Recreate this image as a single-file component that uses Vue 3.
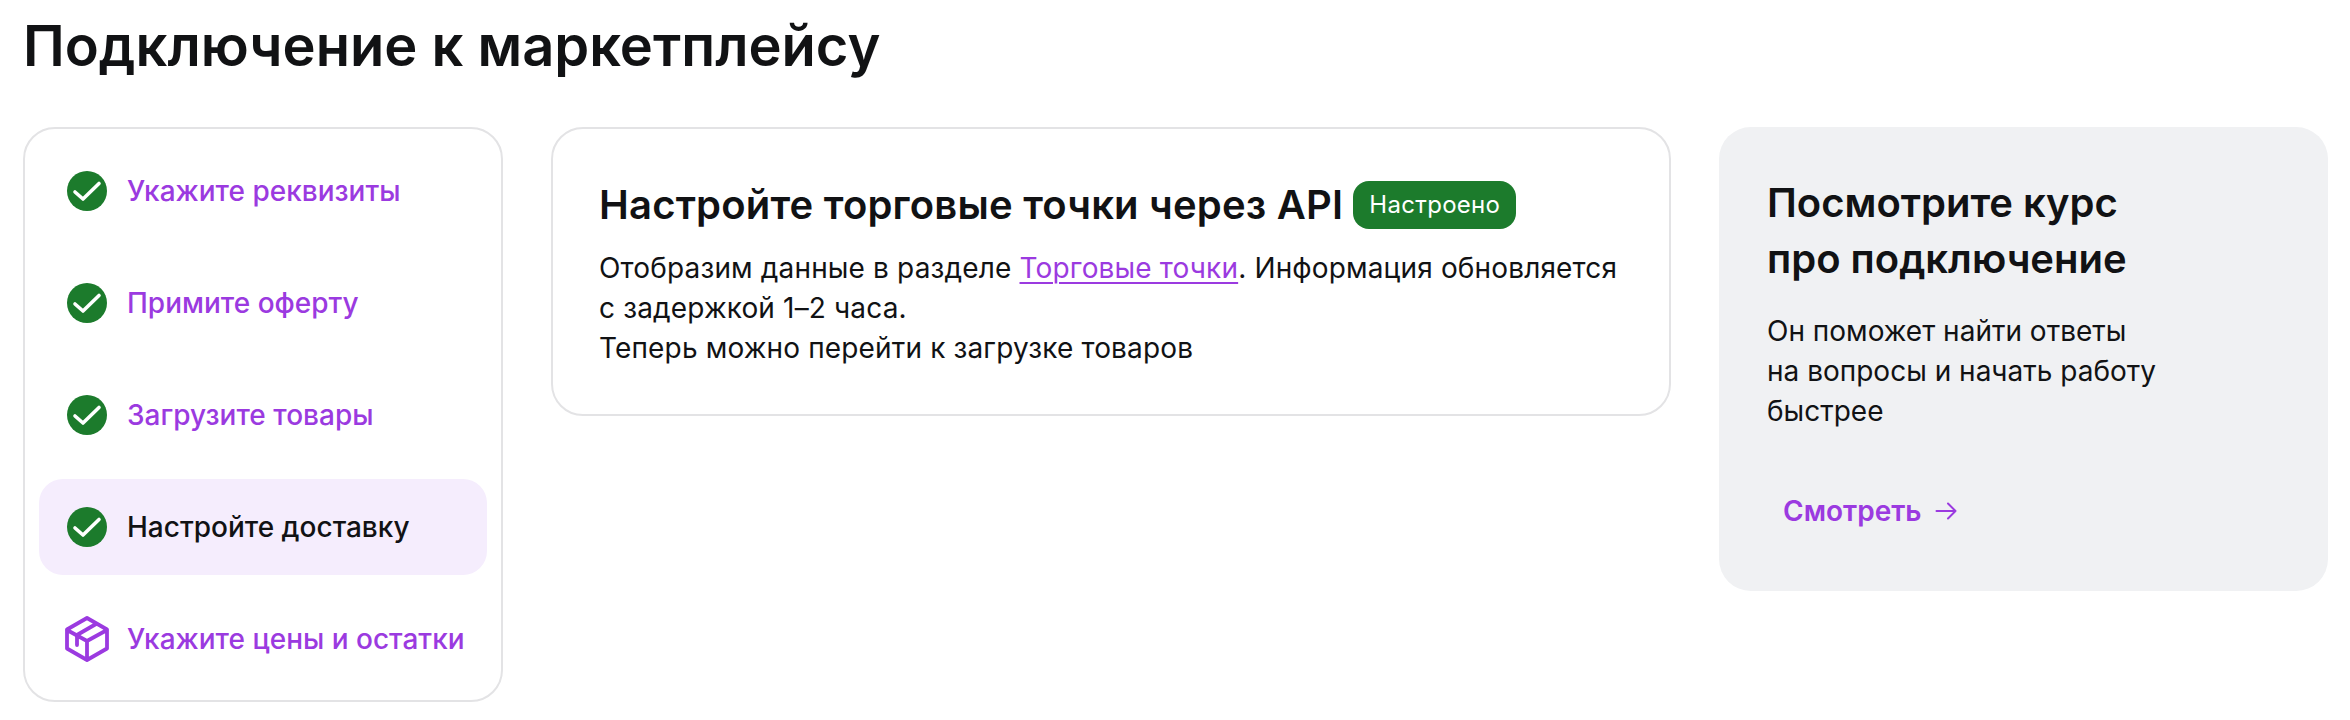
<template>
  <div class="page">
    <h1 class="title">Подключение к маркетплейсу</h1>
    <div class="layout">
      <nav class="steps">
        <a
          v-for="step in steps"
          :key="step.text"
          class="step"
          :class="{ active: step.active }"
        >
          <svg v-if="step.done" class="icon" viewBox="0 0 40 40">
            <circle cx="20" cy="20" r="20" fill="#1c7b2c" />
            <path
              d="M8 21 L16 28 L32 12.5"
              fill="none"
              stroke="#fff"
              stroke-width="3.6"
              stroke-linecap="round"
              stroke-linejoin="round"
            />
          </svg>
          <svg v-else class="icon box" viewBox="0 0 44 46">
            <path
              d="M22 2 L42 13.5 V32.5 L22 44 L2 32.5 V13.5 Z M2 14 L22 25 L42 14 M22 25 V44 M12 19 V29 M12 19 L31 8"
              fill="none"
              stroke="#9b3ae0"
              stroke-width="3.8"
              stroke-linecap="round"
              stroke-linejoin="round"
            />
          </svg>
          <span>{{ step.text }}</span>
        </a>
      </nav>

      <section class="card">
        <div class="card-head">
          <h2>Настройте торговые точки через API</h2>
          <span class="badge">Настроено</span>
        </div>
        <p>
          Отобразим данные в разделе <a class="link">Торговые точки</a>. Информация обновляется<br />
          с задержкой 1–2 часа.<br />
          Теперь можно перейти к загрузке товаров
        </p>
      </section>

      <aside class="course">
        <h2>Посмотрите курс<br />про подключение</h2>
        <p>Он поможет найти ответы<br />на вопросы и начать работу<br />быстрее</p>
        <button class="watch">
          Смотреть
          <svg width="22" height="18" viewBox="0 0 22 18">
            <path
              d="M1.5 9 H20.5 M13 1.5 L20.5 9 L13 16.5"
              fill="none"
              stroke="#9b3ae0"
              stroke-width="2"
              stroke-linecap="round"
              stroke-linejoin="round"
            />
          </svg>
        </button>
      </aside>
    </div>
  </div>
</template>

<script setup>
const steps = [
  { text: 'Укажите реквизиты', done: true },
  { text: 'Примите оферту', done: true },
  { text: 'Загрузите товары', done: true },
  { text: 'Настройте доставку', done: true, active: true },
  { text: 'Укажите цены и остатки', done: false },
];
</script>

<style>
body {
  background: #fff;
}
</style>

<style scoped>
.page {
  width: 2350px;
  height: 720px;
  box-sizing: border-box;
  padding: 12px 21px 0 23px;
  font-family: Inter, 'Noto Sans', sans-serif;
  color: #111214;
  overflow: hidden;
}

.title {
  margin: 0 0 47px;
  font-size: 56px;
  line-height: 68px;
  font-weight: 600;
  letter-spacing: 0;
}

.layout {
  display: grid;
  grid-template-columns: 480px 1120px 609px;
  column-gap: 48px;
  align-items: start;
}

.steps {
  box-sizing: border-box;
  height: 575px;
  padding: 14px;
  border: 2px solid #e3e3e5;
  border-radius: 32px;
  display: flex;
  flex-direction: column;
  gap: 16px;
}

.step {
  height: 96px;
  flex: none;
  display: flex;
  align-items: center;
  gap: 20px;
  padding-left: 28px;
  border-radius: 24px;
  font-size: 28px;
  font-weight: 500;
  color: #9b3ae0;
}

.step.active {
  background: #f5edfd;
  color: #111214;
}

.icon {
  width: 40px;
  height: 40px;
  flex: none;
}

.icon.box {
  width: 44px;
  height: 46px;
  margin: 0 -2px;
}

.card {
  box-sizing: border-box;
  height: 289px;
  padding: 52px 46px;
  border: 2px solid #e3e3e5;
  border-radius: 32px;
}

.card-head {
  display: flex;
  align-items: center;
  gap: 10px;
  margin-bottom: 19px;
}

h2 {
  margin: 0;
  font-size: 40px;
  line-height: 48px;
  font-weight: 600;
}

.card h2 {
  letter-spacing: 0.2px;
}

p {
  margin: 0;
  font-size: 28px;
  line-height: 40px;
  font-weight: 400;
}

.card p {
  letter-spacing: 0.15px;
}

.badge {
  box-sizing: border-box;
  height: 48px;
  padding: 0 16px;
  border-radius: 16px;
  background: #1c7b2c;
  color: #fff;
  font-size: 24px;
  line-height: 48px;
  letter-spacing: 0.3px;
}

.link {
  color: #9b3ae0;
  text-decoration: underline;
  text-underline-offset: 4px;
  text-decoration-thickness: 2px;
}

.course {
  box-sizing: border-box;
  height: 464px;
  padding: 48px;
  border-radius: 32px;
  background: #f0f1f3;
}

.course h2 {
  line-height: 56px;
  margin-bottom: 24px;
}

.watch {
  display: flex;
  align-items: center;
  gap: 13px;
  margin-top: 52px;
  padding: 0 16px;
  height: 56px;
  border: 0;
  background: none;
  font: inherit;
  font-size: 28px;
  font-weight: 600;
  color: #9b3ae0;
}
</style>
